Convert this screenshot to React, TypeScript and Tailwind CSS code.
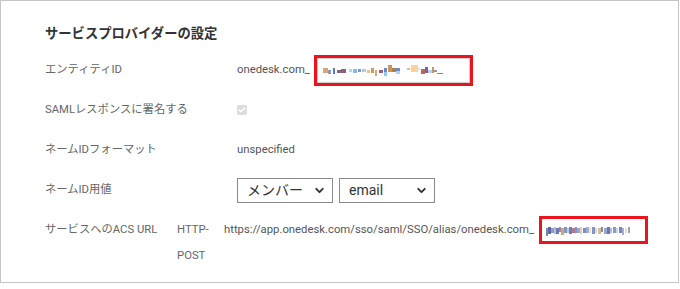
import { ChevronDown, Check } from 'lucide-react';

// blurred / mosaic placeholder for masked values
const mosaic1: [number, number, number, number, string][] = [
  [0, 4, 5, 5, '#d89a60'], [5, 6, 3, 4, '#7a90c8'], [10, 4, 2, 6, '#4a6aa8'], [14, 6, 4, 3, '#6a5a80'],
  [18, 5, 5, 4, '#8a4a78'], [26, 5, 3, 3, '#a8d0f0'], [30, 5, 4, 4, '#7ab0e8'], [35, 5, 3, 3, '#6a90c8'],
  [39, 5, 4, 3, '#a0c8e8'], [44, 6, 3, 3, '#e8c080'], [48, 4, 3, 5, '#c89058'], [52, 6, 2, 6, '#d8a060'],
  [56, 6, 4, 3, '#8a4a78'], [61, 4, 3, 4, '#5a7ac0'], [61, 8, 3, 4, '#8ac0f0'], [65, 1, 4, 7, '#c88a48'],
  [69, 4, 4, 4, '#a8703a'], [73, 4, 4, 3, '#5a80c0'], [73, 7, 4, 3, '#a8d0f0'], [84, 4, 3, 2, '#e8b070'],
  [88, 1, 7, 7, '#ffcc90'], [95, 4, 2, 2, '#c8e0f0'], [98, 5, 4, 5, '#a06040'], [102, 3, 3, 6, '#7a4a90'],
  [105, 6, 4, 3, '#a8d0f0'], [109, 3, 2, 6, '#c88a48'], [111, 6, 3, 2, '#6a90c0'], [114, 9, 6, 1, '#5a80c0'],
];

const mosaic2: [number, number, number, number, string][] = [
  [0, 4, 2, 8, '#6a7ab8'], [2, 3, 3, 7, '#4a5a98'], [5, 4, 3, 5, '#8a90b8'], [8, 3, 2, 7, '#a8b8d8'],
  [10, 4, 3, 6, '#5a6aa8'], [13, 3, 2, 5, '#9a7890'], [15, 4, 3, 7, '#c8a070'], [18, 3, 3, 6, '#7a88c0'],
  [21, 4, 2, 5, '#b8c8e0'], [23, 3, 3, 7, '#5a70b0'], [26, 4, 3, 5, '#a86888'], [29, 3, 2, 6, '#6a88c8'],
  [31, 4, 3, 5, '#8aa0d0'], [34, 3, 2, 7, '#e8c8a0'], [37, 4, 3, 5, '#6a80b8'], [40, 3, 3, 6, '#9aa8c8'],
  [43, 4, 2, 5, '#f0e0c0'], [46, 3, 3, 7, '#7a88b8'], [49, 4, 2, 5, '#c8d8e8'], [52, 4, 3, 6, '#d8b088'],
  [55, 3, 2, 5, '#6a80c0'], [58, 4, 3, 6, '#8aa0c8'], [61, 3, 3, 7, '#5a6aa0'], [64, 4, 2, 5, '#a8b8d8'],
  [67, 3, 3, 6, '#7a90c8'], [70, 4, 2, 5, '#c8d0e8'], [73, 3, 3, 6, '#6a7ab0'], [76, 4, 2, 7, '#9aa8d0'],
  [79, 4, 2, 5, '#e8d8b8'], [82, 3, 2, 6, '#8a98c0'],
];

function Mosaic({ rects, width }: { rects: [number, number, number, number, string][]; width: number }) {
  return (
    <svg width={width} height={13} viewBox={`0 0 ${width} 13`}>
      {rects.map(([x, y, w, h, c], i) => (
        <rect key={i} x={x} y={y} width={w} height={h} fill={c} opacity={0.9} />
      ))}
    </svg>
  );
}

function Select({ value }: { value: string }) {
  return (
    <div className="w-[96px] h-[25px] border border-[#8a8a8a] bg-white flex items-center pl-[9px] pr-[6px]">
      <span className="text-[14px] text-[#333] flex-1">{value}</span>
      <ChevronDown size={13} strokeWidth={3.5} className="text-[#333]" />
    </div>
  );
}

export default function App() {
  return (
    <div className="w-[680px] h-[289px] bg-white font-['Roboto','Noto_Sans_CJK_JP',sans-serif]">
      <div className="w-[679px] h-[283px] border border-[#c6c6c6] pl-[44px] pt-[22px]">
        <div className="h-[22px] leading-[22px] text-[13.3px] font-bold text-[#333]">サービスプロバイダーの設定</div>

        <div className="mt-[5px] h-[40px] flex items-center text-[11.3px]">
          <div className="w-[192px] text-[#666]">エンティティID</div>
          <span className="text-[#555]">onedesk.com_</span>
          <div className="ml-[4px] w-[159px] h-[31px] border-[3px] border-[#e8141e] bg-white">
            <div className="h-full border border-[#d0d0d0] shadow-[inset_0_0_1px_#ccc] flex items-center pl-[5px]">
              <Mosaic rects={mosaic1} width={122} />
            </div>
          </div>
        </div>

        <div className="h-[40px] flex items-center text-[11.3px]">
          <div className="w-[192px] text-[#666]">SAMLレスポンスに署名する</div>
          <div className="w-[10px] h-[10px] rounded-[2px] bg-[#dcdcdc] flex items-center justify-center">
            <Check size={8} strokeWidth={4} className="text-white" />
          </div>
        </div>

        <div className="h-[40px] flex items-center text-[11.3px]">
          <div className="w-[192px] text-[#666]">ネームIDフォーマット</div>
          <span className="text-[#555]">unspecified</span>
        </div>

        <div className="h-[40px] flex items-center">
          <div className="w-[192px] text-[11.3px] text-[#666]">ネームID用値</div>
          <div className="flex gap-[6px]">
            <Select value="メンバー" />
            <Select value="email" />
          </div>
        </div>

        <div className="mt-[7px] flex items-start text-[11.3px] leading-[26px]">
          <div className="w-[132px] text-[#666]">サービスへのACS URL</div>
          <div className="w-[47px] text-[#666]">HTTP-<br />POST</div>
          <span className="text-[#555]">https://app.onedesk.com/sso/saml/SSO/alias/onedesk.com_</span>
          <div className="ml-[5px] -mt-[1px] w-[109px] h-[28px] border-[3px] border-[#e8141e] bg-white flex items-center pl-[4px]">
            <Mosaic rects={mosaic2} width={86} />
          </div>
        </div>
      </div>
    </div>
  );
}
